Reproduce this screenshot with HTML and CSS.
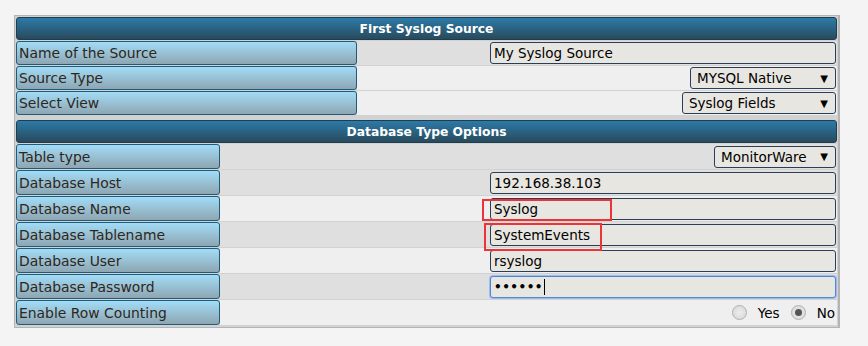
FILE: index.html
```html
<!DOCTYPE html>
<html lang="en">
<head>
    <meta charset="UTF-8">
    <title>Syslog Source</title>
    <link rel="stylesheet" href="styles.css">
</head>
<body>
    <div class="frame">

        <!-- First Syslog Source -->
        <table class="cfg first">
            <tr><th colspan="2" class="head">First Syslog Source</th></tr>
            <tr class="dark">
                <td class="label">Name of the Source</td>
                <td class="val"><input type="text" class="field" value="My Syslog Source"></td>
            </tr>
            <tr>
                <td class="label">Source Type</td>
                <td class="val"><div class="select w-mysql"><span>MYSQL Native</span><span class="arrow">&#9660;</span></div></td>
            </tr>
            <tr>
                <td class="label">Select View</td>
                <td class="val"><div class="select w-view"><span>Syslog Fields</span><span class="arrow">&#9660;</span></div></td>
            </tr>
        </table>

        <!-- Database Type Options -->
        <table class="cfg second">
            <tr><th colspan="2" class="head">Database Type Options</th></tr>
            <tr class="dark">
                <td class="label">Table type</td>
                <td class="val"><div class="select w-table"><span>MonitorWare</span><span class="arrow">&#9660;</span></div></td>
            </tr>
            <tr class="dark">
                <td class="label">Database Host</td>
                <td class="val"><input type="text" class="field" value="192.168.38.103"></td>
            </tr>
            <tr>
                <td class="label">Database Name</td>
                <td class="val"><input type="text" class="field" value="Syslog"></td>
            </tr>
            <tr class="dark">
                <td class="label">Database Tablename</td>
                <td class="val"><input type="text" class="field" value="SystemEvents"></td>
            </tr>
            <tr>
                <td class="label">Database User</td>
                <td class="val"><input type="text" class="field" value="rsyslog"></td>
            </tr>
            <tr class="dark">
                <td class="label">Database Password</td>
                <td class="val"><div class="field focused"><span class="dots">&#8226;&#8226;&#8226;&#8226;&#8226;&#8226;</span><span class="caret"></span></div></td>
            </tr>
            <tr>
                <td class="label">Enable Row Counting</td>
                <td class="val">
                    <div class="radios">
                        <span class="radio"></span><span class="opt">Yes</span>
                        <span class="radio on"></span><span class="opt">No</span>
                    </div>
                </td>
            </tr>
        </table>

        <!-- red highlight marks -->
        <div class="mark mark-name"></div>
        <div class="mark mark-table"></div>
    </div>
</body>
</html>
```

FILE: styles.css
```css
body {
    margin: 0;
    padding: 15px 0 0 14px;
    background-color: #f4f4f4;
    font-family: "DejaVu Sans", Verdana, sans-serif;
    font-size: 13px;
}

.frame {
    position: relative;
    width: 821px;
    border: 1px solid #b4b4b4;
    border-right-width: 2px;
    padding: 0 1px 1px 1px;
    background-color: #d2d2d2;
}

.cfg {
    width: 100%;
    border-collapse: separate;
    border-spacing: 0 1px;
}

.cfg.second {
    margin-top: 3px;
}

.cfg td, .cfg th {
    padding: 0;
}

.head {
    height: 21px;
    background: linear-gradient(#2c7aa8, #284a5c);
    border: 1px solid #1e3d50;
    border-radius: 3px;
    color: #ffffff;
    font-weight: bold;
    font-size: 12.3px;
    text-align: center;
}

.label {
    height: 22px;
    padding-left: 2px !important;
    background: linear-gradient(#a2dcf6, #8ea6b3);
    border: 1px solid #1f5c7c;
    border-radius: 3px;
    color: #30261a;
    font-size: 13.9px;
    white-space: nowrap;
}

.first .label {
    width: 337px;
}

.second .label {
    width: 200px;
    height: 23px;
}

.val {
    background-color: #efefef;
    text-align: right;
    padding-right: 1px !important;
}

.dark .val {
    background-color: #dfdfdf;
}

.field {
    box-sizing: border-box;
    display: inline-flex;
    align-items: center;
    width: 346px;
    height: 22px;
    padding: 0 3px;
    margin: 0;
    vertical-align: middle;
    background-color: #e8e6e1;
    border: 1px solid #2a3f57;
    border-radius: 3px;
    font-family: "DejaVu Sans", Verdana, sans-serif;
    font-size: 13.5px;
    color: #000000;
    text-align: left;
    outline: none;
}

.field.focused {
    border-color: #4f86d9;
    box-shadow: 0 0 0 1px #9dbcec;
}

.dots {
    font-size: 12px;
    font-weight: bold;
    letter-spacing: 0.5px;
}

.caret {
    width: 1px;
    height: 16px;
    margin-left: 1px;
    background-color: #000000;
}

.select {
    box-sizing: border-box;
    display: inline-flex;
    justify-content: space-between;
    align-items: center;
    height: 22px;
    padding: 0 7px 0 6px;
    vertical-align: middle;
    background-color: #e8e6e1;
    border: 1px solid #2a3f57;
    border-radius: 3px;
    color: #000000;
    font-size: 13.5px;
    text-align: left;
}

.arrow {
    font-size: 10px;
}

.w-mysql {
    width: 146px;
}

.w-view {
    width: 154px;
}

.w-table {
    width: 122px;
}

.radios {
    display: flex;
    justify-content: flex-end;
    align-items: center;
    padding-right: 1px;
    color: #000000;
    font-size: 13.5px;
}

.radio {
    box-sizing: border-box;
    width: 15px;
    height: 15px;
    border: 1px solid #b0b0b0;
    border-radius: 50%;
    background: radial-gradient(#ececec, #d6d6d6);
    display: flex;
    align-items: center;
    justify-content: center;
}

.radio.on::after {
    content: "";
    width: 7px;
    height: 7px;
    border-radius: 50%;
    background-color: #555555;
}

.opt {
    margin: 0 11px 0 11px;
}

.opt:last-child {
    margin-right: 0;
}

.mark {
    position: absolute;
    border: 2px solid #ee3336;
}

.mark-name {
    left: 467px;
    top: 183px;
    width: 126px;
    height: 18px;
}

.mark-table {
    left: 469px;
    top: 207px;
    width: 114px;
    height: 24px;
}
```
